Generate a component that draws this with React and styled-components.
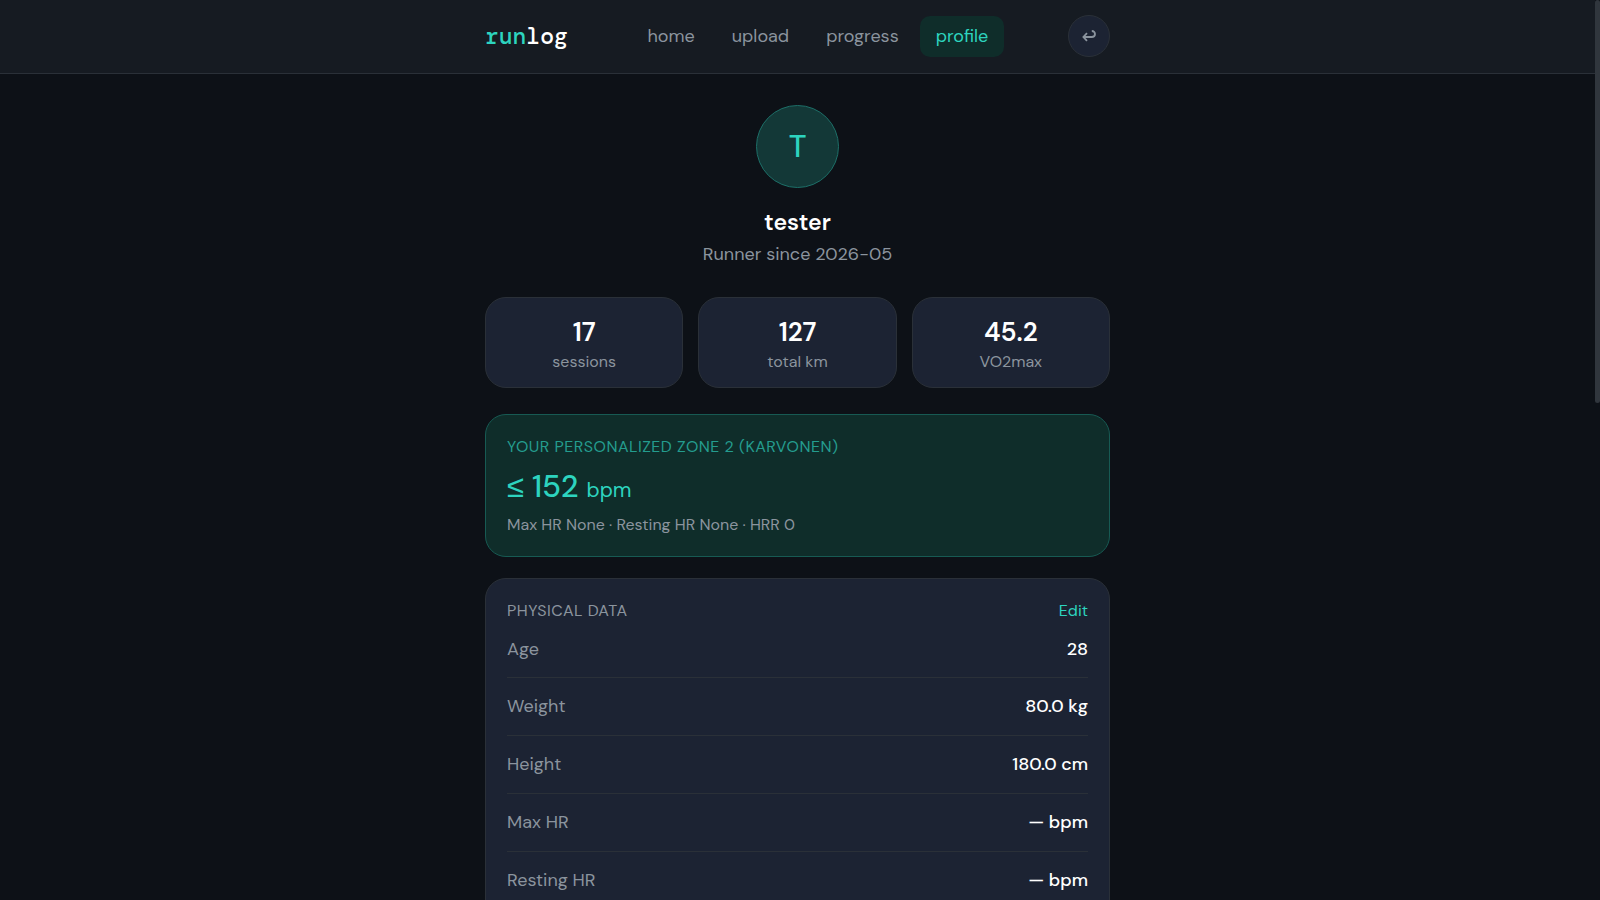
import React from "react";
import styled, { createGlobalStyle, css } from "styled-components";

const color = {
  page: "#0d1117",
  header: "#161b22",
  card: "#1c2333",
  line: "#2a3038",
  accent: "#2dd4bf",
  soft: "#0f2d2a",
  muted: "#8b949e",
  text: "#ffffff",
};

const GlobalStyle = createGlobalStyle`
  *, *::before, *::after { box-sizing: border-box; }
  html { scrollbar-width: none; background: ${color.page}; }
  body {
    margin: 0;
    padding-right: 5px;
    color: ${color.text};
    font-family: "DM Sans", Inter, "Open Sans", sans-serif;
    font-size: 18px;
  }
`;

const Header = styled.header`
  background: ${color.header};
  border-bottom: 1px solid ${color.line};
`;

const HeaderInner = styled.div`
  display: flex;
  align-items: center;
  justify-content: space-between;
  max-width: 625px;
  margin: 0 auto;
  padding: 15px 0 16px;
`;

const Logo = styled.a`
  color: ${color.text};
  font-family: "DM Mono", "Liberation Mono", monospace;
  font-size: 23px;
  font-weight: 500;
  line-height: 28px;
  text-decoration: none;
`;

const LogoAccent = styled.span`
  color: ${color.accent};
`;

const Nav = styled.nav`
  display: flex;
  gap: 5px;
`;

const NavLink = styled.a`
  padding: 8px 16px;
  border-radius: 10px;
  color: ${color.muted};
  line-height: 25px;
  text-decoration: none;
  ${(p) =>
    p.$active &&
    css`
      background: ${color.soft};
      color: ${color.accent};
    `}
`;

const RoundButton = styled.button`
  display: grid;
  place-items: center;
  width: 42px;
  height: 42px;
  padding: 0;
  border: 1px solid ${color.line};
  border-radius: 50%;
  background: ${color.card};
  color: ${color.muted};
  cursor: pointer;
`;

const Main = styled.main`
  max-width: 625px;
  margin: 0 auto;
  padding: 31px 0;
`;

const Profile = styled.section`
  display: flex;
  flex-direction: column;
  align-items: center;
  margin-bottom: 29px;
`;

const Avatar = styled.div`
  display: grid;
  place-items: center;
  width: 83px;
  height: 83px;
  margin-bottom: 16px;
  border: 1px solid #1d6f68;
  border-radius: 50%;
  background: #133837;
  color: ${color.accent};
  font-size: 31px;
  font-weight: 500;
  line-height: 40px;
`;

const Name = styled.h1`
  margin: 0;
  font-size: 23px;
  font-weight: 600;
  line-height: 36px;
`;

const Since = styled.p`
  margin: 0;
  color: ${color.muted};
  line-height: 28px;
`;

const Stats = styled.section`
  display: grid;
  grid-template-columns: repeat(3, 1fr);
  gap: 15px;
  margin-bottom: 26px;
`;

const Card = styled.section`
  border: 1px solid ${color.line};
  border-radius: 21px;
  background: ${color.card};
`;

const StatCard = styled(Card).attrs({ as: "div" })`
  padding: 17px 16px 13px;
  text-align: center;
`;

const StatValue = styled.div`
  font-size: 26px;
  font-weight: 600;
  line-height: 35px;
`;

const StatLabel = styled.div`
  color: ${color.muted};
  font-size: 16px;
  line-height: 24px;
`;

const ZoneCard = styled(Card)`
  margin-bottom: 21px;
  padding: 21px;
  border-color: #175a53;
  background: ${color.soft};
`;

const Caption = styled.h2`
  margin: 0;
  color: ${(p) => (p.$accent ? "#249c8e" : color.muted)};
  font-size: 16px;
  font-weight: 400;
  letter-spacing: 0.03em;
  line-height: 21px;
  text-transform: uppercase;
`;

const ZoneValue = styled.p`
  margin: 9px 0 3px;
  color: ${color.accent};
  font-size: 31px;
  font-weight: 500;
  line-height: 42px;
`;

const ZoneSign = styled.span`
  font-family: "Liberation Sans", sans-serif;
  font-weight: 400;
`;

const ZoneUnit = styled.span`
  font-size: 21px;
  font-weight: 400;
`;

const ZoneNote = styled.p`
  margin: 0;
  color: ${color.muted};
  font-size: 16px;
  line-height: 21px;
`;

const DataCard = styled(Card)`
  padding: 21px;
`;

const DataHeader = styled.div`
  display: flex;
  align-items: center;
  justify-content: space-between;
`;

const EditLink = styled.a`
  color: ${color.accent};
  font-size: 16px;
  line-height: 21px;
  text-decoration: none;
`;

const DataTable = styled.table`
  width: 100%;
  border-collapse: collapse;
`;

const DataRow = styled.tr`
  height: 58px;
  &:first-child {
    height: 56px;
  }
  & + & {
    border-top: 1px solid ${color.line};
  }
`;

const DataLabel = styled.th`
  padding: 0;
  color: ${color.muted};
  font-weight: 400;
  text-align: left;
`;

const DataValue = styled.td`
  padding: 0;
  font-weight: 500;
  text-align: right;
`;

const ScrollThumb = styled.div`
  position: fixed;
  top: 0;
  right: 0;
  width: 5px;
  height: calc(45vh - 2px);
  border-radius: 3px;
  background: #30363d;
`;

const links = ["home", "upload", "progress", "profile"];

const stats = [
  ["17", "sessions"],
  ["127", "total km"],
  ["45.2", "VO2max"],
];

const physical = [
  ["Age", "28"],
  ["Weight", "80.0 kg"],
  ["Height", "180.0 cm"],
  ["Max HR", "— bpm"],
  ["Resting HR", "— bpm"],
];

function ReturnIcon() {
  return (
    <svg width="14" height="12" viewBox="0 0 14 12" fill="none" stroke="currentColor" strokeWidth="1.8" aria-hidden="true">
      <path d="M5 3.200 1.400 7 5 10.800M1.600 7H9.600C11.800 7 13 5.700 13 4S11.800 1 9.800 1" />
    </svg>
  );
}

export default function App() {
  return (
    <>
      <GlobalStyle />
      <Header>
        <HeaderInner>
          <Logo href="#home">
            <LogoAccent>run</LogoAccent>log
          </Logo>
          <Nav aria-label="Main">
            {links.map((link) => (
              <NavLink key={link} href={`#${link}`} $active={link === "profile"}>
                {link}
              </NavLink>
            ))}
          </Nav>
          <RoundButton type="button" aria-label="Log out">
            <ReturnIcon />
          </RoundButton>
        </HeaderInner>
      </Header>
      <Main>
        <Profile>
          <Avatar>T</Avatar>
          <Name>tester</Name>
          <Since>Runner since 2026-05</Since>
        </Profile>
        <Stats>
          {stats.map(([value, label]) => (
            <StatCard key={label}>
              <StatValue>{value}</StatValue>
              <StatLabel>{label}</StatLabel>
            </StatCard>
          ))}
        </Stats>
        <ZoneCard>
          <Caption $accent>Your personalized zone 2 (Karvonen)</Caption>
          <ZoneValue>
            <ZoneSign>≤</ZoneSign> 152 <ZoneUnit>bpm</ZoneUnit>
          </ZoneValue>
          <ZoneNote>Max HR None · Resting HR None · HRR 0</ZoneNote>
        </ZoneCard>
        <DataCard>
          <DataHeader>
            <Caption>Physical data</Caption>
            <EditLink href="#edit">Edit</EditLink>
          </DataHeader>
          <DataTable>
            <tbody>
              {physical.map(([label, value]) => (
                <DataRow key={label}>
                  <DataLabel scope="row">{label}</DataLabel>
                  <DataValue>{value}</DataValue>
                </DataRow>
              ))}
            </tbody>
          </DataTable>
        </DataCard>
      </Main>
      <ScrollThumb />
    </>
  );
}
